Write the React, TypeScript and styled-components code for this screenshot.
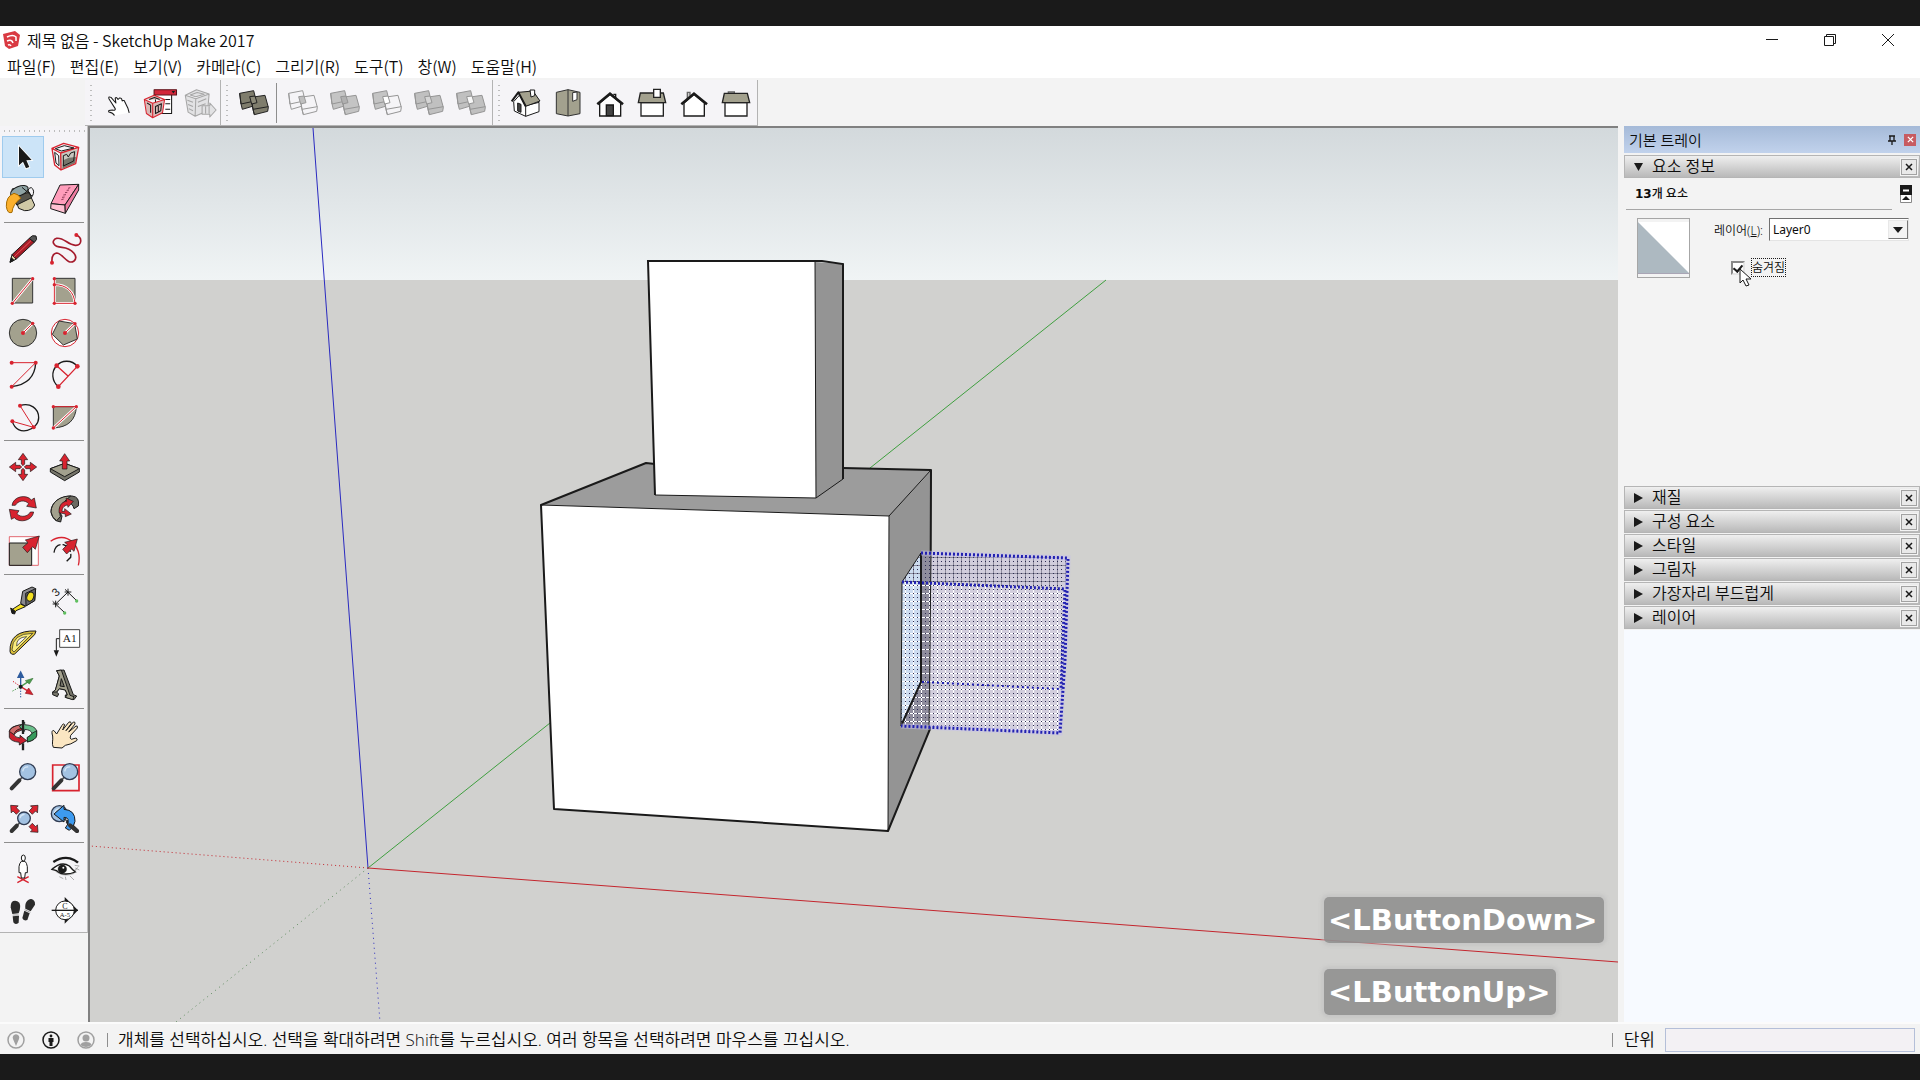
import React, { ReactNode, useState } from "react";
import styled, { createGlobalStyle, css } from "styled-components";

const INK = "#1a1a1a";
const RED = "#d8232f";
const STONE = "#a3a18e";
const uiFont = `"Noto Sans CJK KR", "Open Sans", sans-serif`;
const statusFont = `"Open Sans", "Noto Sans CJK KR", sans-serif`;
const trayFont = `"Noto Sans", "Noto Sans CJK KR", sans-serif`;

const GlobalStyle = createGlobalStyle`
  * { box-sizing: border-box; }
  body { margin: 0; background: ${INK}; color: #0c0c0c; font-family: ${uiFont}; font-weight: 350; }
  button, input, select { font: inherit; color: inherit; margin: 0; padding: 0; }
  button { border: 0; background: none; }
`;

const Screen = styled.div`
  display: flex;
  flex-direction: column;
  height: 100vh;
  padding: 26px 0;
  overflow: hidden;
`;
const AppWindow = styled.div`
  flex: 1;
  min-height: 0;
  display: flex;
  flex-direction: column;
  background: #f3f3f3;
`;
const TitleBar = styled.header`
  display: flex;
  align-items: center;
  height: 28px;
  padding: 0 3px 0 2px;
  background: #fff;
`;
const Title = styled.h1`
  flex: 1;
  margin: 0 0 0 5px;
  font-size: 16px;
  font-weight: 350;
  line-height: 28px;
`;
const Captions = styled.div`
  display: flex;
`;
const CaptionButton = styled.button`
  display: grid;
  place-items: center;
  width: 58px;
  height: 28px;
`;
const MenuBar = styled.nav`
  display: flex;
  gap: 14px;
  height: 24px;
  padding: 0 7px;
  background: #fff;
`;
const MenuButton = styled.button`
  font-size: 16px;
  line-height: 24px;
  white-space: nowrap;
`;
const ToolStrip = styled.div`
  display: flex;
  height: 48px;
  padding: 2px 0 0 85px;
`;
const dots = css`
  background-image: radial-gradient(circle, #bdbdbd 1px, transparent 1px);
`;
const ToolGroup = styled.div`
  display: flex;
  align-items: center;
  padding: 0 0 0 4px;
  border-right: 1px solid #b3b3b3;
  border-bottom: 1px solid #b3b3b3;
  background: #f5f4f7;
`;
const GripV = styled.span`
  align-self: stretch;
  width: 4px;
  margin: 3px 4px 3px 0;
  background-size: 4px 5px;
  ${dots}
`;
const GripH = styled.span`
  height: 4px;
  margin: 3px 2px;
  background-size: 5px 4px;
  ${dots}
`;
const ThinRule = styled.span`
  width: 1px;
  height: 40px;
  margin: 0 5px 0 1px;
  background: #8e8e8e;
`;
const Workspace = styled.div`
  flex: 1;
  min-height: 0;
  display: flex;
`;
const SideTools = styled.div`
  flex: none;
  align-self: flex-start;
  display: flex;
  flex-direction: column;
  width: 88px;
  border-right: 1px solid #c2c2c2;
  border-bottom: 1px solid #b3b3b3;
  background: #f5f4f7;
`;
const ToolGrid = styled.div`
  display: grid;
  grid-template-columns: 42px 42px;
  padding-left: 2px;
  & + & {
    margin-top: 4px;
    padding-top: 4px;
    position: relative;
  }
  & + &::before {
    content: "";
    position: absolute;
    top: -2px;
    left: 4px;
    right: 3px;
    height: 1px;
    background: #8e8e8e;
  }
`;
const Tool = styled.button<{ $on?: boolean; $narrow?: boolean }>`
  display: block;
  width: ${(p) => (p.$narrow ? 41 : 42)}px;
  height: 42px;
  border: 1px solid ${(p) => (p.$on ? "#9fcbee" : "transparent")};
  background: ${(p) => (p.$on ? "#cce4f8" : "transparent")};
  & > svg {
    display: block;
    margin: -1px;
    width: 42px;
    height: 42px;
  }
`;
const Viewport = styled.main`
  flex: 1;
  min-width: 0;
  position: relative;
  border-top: 2px solid #808080;
  border-left: 2px solid #808080;
  background: #d1d1cf;
  overflow: hidden;
`;
const Scene = styled.svg`
  display: block;
  width: 100%;
  height: 100%;
`;
const KeyLog = styled.div`
  position: absolute;
  left: 1234px;
  bottom: 7px;
  display: flex;
  flex-direction: column;
  align-items: flex-start;
  gap: 26px;
`;
const KeyBadge = styled.span`
  padding: 0 6px 0 4px;
  border-radius: 5px;
  background: rgba(145, 145, 145, 0.92);
  box-shadow: 0 0 3px 3px rgba(190, 190, 190, 0.5);
  color: #fff;
  font-family: "DejaVu Sans", sans-serif;
  font-size: 29px;
  font-weight: 700;
  line-height: 46px;
  white-space: nowrap;
`;
const Tray = styled.aside`
  flex: none;
  display: flex;
  flex-direction: column;
  gap: 1px;
  width: 302px;
  padding-left: 6px;
  font-family: ${trayFont};
`;
const TrayHead = styled.div`
  display: flex;
  align-items: center;
  height: 27px;
  margin-bottom: 1px;
  padding: 0 4px 0 5px;
  background: linear-gradient(#a5bad8, #c1d2ec);
`;
const TrayTitle = styled.h2`
  flex: 1;
  margin: 0;
  font-size: 15px;
  font-weight: 350;
  line-height: 26px;
`;
const PinButton = styled.button`
  display: grid;
  width: 12px;
  height: 12px;
  margin-right: 6px;
`;
const TrayClose = styled.button`
  display: grid;
  place-items: center;
  width: 12px;
  height: 12px;
  background: #c75b61;
`;
const SectionHead = styled.div`
  display: flex;
  align-items: center;
  height: 23px;
  padding-right: 2px;
  border: 1px solid #b5b5b5;
  background: linear-gradient(#efefef, #b9b9b9);
`;
const SectionToggle = styled.button`
  flex: 1;
  display: flex;
  align-items: center;
  gap: 9px;
  padding-left: 9px;
  font-size: 16px;
  line-height: 21px;
  text-align: left;
`;
const SectionClose = styled.button`
  display: grid;
  place-items: center;
  width: 16px;
  height: 16px;
  border: 1px solid #a2a2a2;
  outline: 1px solid #f4f4f4;
  background: #e9e9e9;
`;
const EntityPanel = styled.section`
  height: 306px;
  padding: 6px 8px 0 2px;
  font-size: 12px;
`;
const EntityHead = styled.div`
  display: flex;
  align-items: center;
  justify-content: space-between;
  padding-left: 9px;
`;
const DetailsButton = styled.button`
  & > svg {
    display: block;
  }
`;
const EntityCount = styled.strong`
  font-size: 12px;
  font-weight: 500;
  line-height: 18px;
`;
const CountDigits = styled.span`
  font-family: "DejaVu Sans", sans-serif;
  font-weight: 700;
`;
const EntityRule = styled.hr`
  height: 1px;
  margin: 6px 20px 8px 0;
  border: 0;
  background: #a6a6a6;
`;
const EntityBody = styled.div`
  display: flex;
  align-items: flex-start;
  padding: 0 3px 0 11px;
`;
const Swatch = styled.button`
  width: 53px;
  height: 60px;
  border: 1px solid #a6a6a6;
`;
const EntityFields = styled.div`
  flex: 1;
  margin-left: 24px;
`;
const LayerRow = styled.div`
  display: flex;
  align-items: center;
  gap: 6px;
  white-space: nowrap;
`;
const SelectBox = styled.div`
  flex: 1;
  position: relative;
`;
const LayerSelect = styled.select`
  display: block;
  width: 100%;
  height: 23px;
  padding-left: 3px;
  appearance: none;
  border: 1px solid;
  border-color: #707070 #e4e4e4 #e4e4e4 #707070;
  border-radius: 0;
  background: #fff;
  font-size: 12px;
  font-weight: 400;
`;
const SelectArrow = styled.span`
  position: absolute;
  top: 2px;
  right: 1px;
  display: grid;
  place-items: center;
  width: 20px;
  height: 19px;
  border: 1px solid;
  border-color: #e8e8e8 #777 #777 #e8e8e8;
  background: #f3f3f3;
  pointer-events: none;
`;
const HiddenRow = styled.div`
  display: flex;
  align-items: center;
  gap: 6px;
  position: relative;
  margin: 17px 0 0 17px;
`;
const HiddenBox = styled.input`
  appearance: none;
  display: grid;
  place-items: center;
  width: 14px;
  height: 14px;
  border: 2px solid;
  border-color: #888 #e4e4e4 #e4e4e4 #888;
  background: #fff;
  &:checked::after {
    content: "";
    width: 4px;
    height: 7px;
    border: solid ${INK};
    border-width: 0 2px 2px 0;
    transform: rotate(40deg);
  }
`;
const HiddenLabel = styled.label`
  border: 1px dotted ${INK};
  line-height: 17px;
`;
const Pointer = styled.svg`
  position: absolute;
  left: 8px;
  top: 10px;
  width: 14px;
  height: 20px;
`;
const TrayRest = styled.div`
  flex: 1;
  background: #f7faff;
`;
const StatusBar = styled.footer`
  display: flex;
  align-items: center;
  height: 32px;
  padding: 1px 5px 0 7px;
  border-top: 2px solid #fbfbfb;
  font-family: ${statusFont};
  font-size: 17px;
`;
const StatusLinks = styled.div`
  display: flex;
  gap: 17px;
  margin-right: 12px;
`;
const StatusButton = styled.button`
  width: 18px;
  height: 18px;
  & > svg {
    display: block;
  }
`;
const StatusRule = styled.span`
  width: 1px;
  height: 14px;
  background: #8e8e8e;
`;
const StatusText = styled.p`
  flex: 1;
  margin: 0 0 0 10px;
  line-height: 28px;
`;
const UnitLabel = styled.label`
  margin: 0 10px 0 11px;
  line-height: 28px;
`;
const UnitInput = styled.input`
  width: 250px;
  height: 24px;
  border: 1px solid #b4bfd8;
  background: #f3f1f4;
`;

/* ---------- icons ---------- */

const Dot = ({ x, y, r = 5 }: { x: number; y: number; r?: number }) => <circle cx={x} cy={y} r={r} fill={RED} />;
const RedLine = ({ d }: { d: string }) => (
  <g fill="none">
    <path d={d} stroke="#fff" strokeWidth="8" />
    <path d={d} stroke={RED} strokeWidth="3" />
  </g>
);
const Arrow = ({ x, y, a, s = 1, c = RED }: { x: number; y: number; a: number; s?: number; c?: string }) => (
  <path
    transform={`translate(${x} ${y}) rotate(${a}) scale(${s})`}
    d="M-20 -9H-2V-19L20 0L-2 19V9H-20Z"
    fill={c}
    stroke={INK}
    strokeWidth="2.5"
  />
);
const Lens = ({ x, y, r = 24, hx, hy }: { x: number; y: number; r?: number; hx: number; hy: number }) => {
  const d = Math.hypot(hx - x, hy - y);
  const ux = (hx - x) / d;
  const uy = (hy - y) / d;
  return (
    <g strokeLinecap="round">
      <path d={`M${x + ux * r} ${y + uy * r}L${hx} ${hy}`} stroke="#555" strokeWidth="5" />
      <path d={`M${x + ux * (r + 12)} ${y + uy * (r + 12)}L${hx} ${hy}`} stroke="#333" strokeWidth="12" />
      <circle cx={x} cy={y} r={r} fill="#a3c2e2" stroke="#2f3b52" strokeWidth="4" />
      <path d={`M${x - r * 0.6} ${y - r * 0.1}A${r * 0.6} ${r * 0.6} 0 0 1 ${x} ${y - r * 0.6}`} fill="none" stroke="#d6e6f5" strokeWidth="4" />
    </g>
  );
};

type Item = { name: string; box: string; art: ReactNode };

const sideGroups: Item[][] = [
  [
    {
      name: "선택",
      box: "6 33",
      art: <path d="M57 64V121L69 110L78 130L88 126L79 106L95 105Z" fill={INK} stroke="#fff" strokeWidth="5" paintOrder="stroke" />,
    },
    {
      name: "구성 요소 만들기",
      box: "132 33",
      art: (
        <g strokeLinejoin="round">
          <path d="M182 84L232 72L226 115L184 134Z" fill="#c9c8c0" />
          <path d="M190 106L206 98L228 96L225 115L187 131Z" fill="#77766c" />
          <path d="M156 70L191 55L236 67L227 116L183 135L164 120ZM156 70L182 84L236 67M182 84L183 135" fill="none" stroke={RED} strokeWidth="4" />
          <path d="M166 71L193 62L222 69L184 78ZM164 82L176 92L177 122L168 114ZM190 92L200 88L205 96L212 84L224 80L221 108L190 123Z" fill="none" stroke={INK} strokeWidth="3" />
        </g>
      ),
    },
    {
      name: "페인트 통",
      box: "6 159",
      art: (
        <g stroke={INK} strokeWidth="3" strokeLinejoin="round">
          <path d="M36 192L78 184L104 240Q98 258 74 257L56 250Z" fill="#cfc8a6" />
          <path d="M40 214L88 202L95 218L50 240Z" fill="#55534b" />
          <ellipse cx="58" cy="198" rx="28" ry="14" transform="rotate(-22 58 198)" fill="#8fa3a4" />
          <path d="M66 187Q86 204 97 214Q106 196 94 188Q84 188 84 202" fill="none" />
          <path d="M42 205Q18 214 19 244Q22 268 36 262Q38 238 62 220Q56 207 42 205Z" fill="#fbb02d" stroke="#a66b00" />
        </g>
      ),
    },
    {
      name: "지우개",
      box: "132 159",
      art: (
        <g stroke={INK} strokeWidth="3" strokeLinejoin="round">
          <path d="M180 180L236 178L195 240L153 236Z" fill="#ff9dbb" />
          <path d="M153 236L195 240L196 265L152 251Z" fill="#ffc0d2" />
          <path d="M195 240L236 178V195L196 265Z" fill="#ee7ba0" />
          <path d="M184 224L191 222M186 217L194 216M190 210L198 209M195 203L202 202M200 196L207 195M204 190L211 188" stroke="#8b3a55" />
        </g>
      ),
    },
  ],
  [
    {
      name: "선",
      box: "6 309",
      art: (
        <g stroke={INK} strokeWidth="3" strokeLinejoin="round">
          <path d="M30 412L36 389L49 402Z" fill="#e7d7a8" />
          <path d="M30 412L34 398L42 406Z" fill={INK} />
          <path d="M36 389L88 340L103 352L49 402Z" fill="#a81b26" />
          <path d="M42 396L94 346" stroke="#e5555b" />
          <path d="M88 340Q96 328 108 333Q114 344 103 352Z" fill="#555" />
        </g>
      ),
    },
    {
      name: "자유곡선",
      box: "132 309",
      art: (
        <g fill="none">
          <path d="M229 330C248 338 246 362 226 361C204 360 190 336 170 340C152 346 158 366 186 367C218 370 236 396 222 408C202 422 188 384 170 384C158 386 155 400 156 412" stroke="#a51a2c" strokeWidth="5" />
          <Dot x={229} y={330} r={6} />
          <Dot x={156} y={413} r={6} />
        </g>
      ),
    },
    {
      name: "직사각형",
      box: "6 435",
      art: (
        <g>
          <path d="M37 460H98V534H37Z" fill={STONE} stroke="#333" strokeWidth="3" />
          <RedLine d="M37 535L98 461" />
          <Dot x={37} y={535} />
          <Dot x={98} y={461} />
        </g>
      ),
    },
    {
      name: "회전 직사각형",
      box: "132 435",
      art: (
        <g>
          <path d="M163 460H225V534H163Z" fill={STONE} stroke="#333" strokeWidth="3" />
          <RedLine d="M163 461V535H225M163 479C200 479 222 500 225 535" />
          <Dot x={163} y={461} />
          <Dot x={163} y={479} />
          <Dot x={163} y={535} />
          <Dot x={225} y={535} />
        </g>
      ),
    },
    {
      name: "원",
      box: "6 561",
      art: (
        <g>
          <circle cx="69" cy="624" r="41" fill={STONE} stroke="#333" strokeWidth="3" />
          <RedLine d="M69 624L98 595" />
          <Dot x={69} y={624} r={6} />
          <Dot x={98} y={595} />
        </g>
      ),
    },
    {
      name: "다각형",
      box: "132 561",
      art: (
        <g>
          <circle cx="195" cy="624" r="41" fill="#fff" stroke={RED} strokeWidth="3" />
          <path d="M177 588L224 596L232 642L190 660L157 628Z" fill={STONE} stroke="#333" strokeWidth="3" />
          <RedLine d="M195 624L224 596" />
          <Dot x={195} y={624} r={6} />
          <Dot x={225} y={596} />
        </g>
      ),
    },
    {
      name: "호",
      box: "6 687",
      art: (
        <g fill="none">
          <path d="M107 713Q104 776 35 785" stroke={INK} strokeWidth="4" />
          <path d="M35 713H107L35 785" stroke={RED} strokeWidth="3" />
          <Dot x={35} y={713} r={6} />
          <Dot x={107} y={713} r={6} />
          <Dot x={35} y={785} r={6} />
        </g>
      ),
    },
    {
      name: "2점 호",
      box: "132 687",
      art: (
        <g fill="none">
          <path d="M232 724C214 702 184 706 170 722C152 740 156 770 175 785" stroke={INK} strokeWidth="4" />
          <path d="M232 724L175 785M170 722L204 753" stroke={RED} strokeWidth="4" />
          <Dot x={232} y={724} r={7} />
          <Dot x={170} y={722} r={7} />
          <Dot x={175} y={785} r={7} />
        </g>
      ),
    },
    {
      name: "3점 호",
      box: "6 813",
      art: (
        <g fill="none">
          <path d="M60 842C90 832 116 850 116 878C116 916 52 938 37 890" stroke={INK} strokeWidth="4" />
          <path d="M60 842L101 907L37 889" stroke={RED} strokeWidth="3" />
          <Dot x={60} y={842} r={6} />
          <Dot x={101} y={907} r={6} />
          <Dot x={37} y={889} r={6} />
        </g>
      ),
    },
    {
      name: "파이",
      box: "132 813",
      art: (
        <g>
          <path d="M160 845H229Q226 906 160 909Z" fill={STONE} stroke="#333" strokeWidth="3" />
          <RedLine d="M160 909L229 845" />
          <path d="M160 845H229" stroke={RED} strokeWidth="3" />
          <Dot x={160} y={845} />
          <Dot x={229} y={845} />
          <Dot x={160} y={909} />
        </g>
      ),
    },
  ],
  [
    {
      name: "이동",
      box: "6 18",
      art: [0, 90, 180, 270].map((a) => (
        <path key={a} transform={`translate(69 81) rotate(${a})`} d="M9 -5H22V-14L41 0L22 14V5H9L4 0Z" fill={RED} stroke={INK} strokeWidth="2" />
      )),
    },
    {
      name: "밀기/끌기",
      box: "132 18",
      art: (
        <g stroke={INK} strokeWidth="3" strokeLinejoin="round">
          <path d="M151 86L194 70L238 86V96L194 122L151 96Z" fill="#76756a" />
          <path d="M151 86L194 70L238 86L194 110Z" fill={STONE} />
          <path d="M187 87V63H179L194 41L209 63H201V87Z" fill={RED} strokeWidth="2" />
        </g>
      ),
    },
    {
      name: "회전",
      box: "6 144",
      art: (
        <g fill={RED} stroke={INK} strokeWidth="2" strokeLinejoin="round">
          <path d="M36 196C40 168 80 162 94 180L103 174L109 204L80 199L86 191C74 178 54 182 46 196Z" />
          <path d="M101 216C97 244 57 250 43 233L34 238L28 208L57 212L51 221C62 234 84 230 91 216Z" />
        </g>
      ),
    },
    {
      name: "따라가기",
      box: "132 144",
      art: (
        <g stroke={INK} strokeWidth="3" strokeLinejoin="round">
          <path d="M168 242C136 216 158 168 216 168Q240 170 235 198L222 206Q218 190 205 188C178 188 174 212 186 228L182 246Z" fill="#6b6a62" />
          <path d="M153 216C154 186 180 168 212 168Q190 184 180 204Q178 216 181 230L170 242Q156 234 153 216Z" fill={STONE} />
          <path d="M177 218C176 190 192 184 200 184L198 174L220 184L204 202L203 195C190 196 186 208 186 214H194V206L214 222L196 230V222Z" fill={RED} strokeWidth="2" />
        </g>
      ),
    },
    {
      name: "배율",
      box: "6 270",
      art: (
        <g>
          <path d="M28 290H115V376H28Z" fill="#fff" stroke={RED} strokeWidth="2" />
          <path d="M28 309H95V376H28Z" fill={STONE} stroke={INK} strokeWidth="3" />
          <path d="M68 322L84 308L76 300L118 288L106 328L98 320L82 338Z" fill={RED} stroke={INK} strokeWidth="2" />
        </g>
      ),
    },
    {
      name: "간격띄우기",
      box: "132 270",
      art: (
        <g fill="none" strokeWidth="4">
          <path d="M152 304C196 270 250 316 235 376" stroke={RED} />
          <path d="M162 338Q166 310 190 314Q216 324 212 352L200 364" stroke={INK} strokeDasharray="34 6" />
          <path d="M188 328L202 314L194 307L232 297L222 334L215 327L200 342Z" fill={RED} stroke={INK} strokeWidth="2" />
        </g>
      ),
    },
  ],
  [
    {
      name: "줄자 도구",
      box: "6 420",
      art: (
        <g stroke={INK} strokeWidth="3" strokeLinejoin="round">
          <path d="M62 492L76 500L48 512L44 520L34 510Z" fill="#f4e022" />
          <path d="M32 504L44 512V522L36 520Z" fill={INK} />
          <path d="M68 454L96 441L107 446L104 482L76 498L62 490Z" fill="#8a8a8e" />
          <path d="M77 460L107 446L104 482L78 498Z" fill="#66666b" />
          <ellipse cx="91" cy="470" rx="10" ry="14" fill="#f4e022" transform="rotate(20 91 470)" />
        </g>
      ),
    },
    {
      name: "치수",
      box: "132 420",
      art: (
        <g stroke={INK} strokeWidth="3" fill="none">
          <path d="M167 492L204 456M195 448L230 482M158 484L194 518M194 456H214M204 446V467M158 492H177M167 482V502" />
          <text x="168" y="472" transform="rotate(-42 168 472)" fontSize="34" fontFamily="Liberation Sans" fill={INK} stroke="none">
            3
          </text>
          <circle cx="230" cy="483" r="5" fill="#5fbf5f" stroke="none" />
          <circle cx="194" cy="519" r="5" fill="#5fbf5f" stroke="none" />
        </g>
      ),
    },
    {
      name: "각도기",
      box: "6 546",
      art: (
        <g stroke={INK} strokeWidth="3" strokeLinejoin="round">
          <path d="M30 634Q28 570 108 573L104 584L44 642Q32 646 30 634Z" fill="#d9be3a" />
          <path d="M36 630Q36 580 98 580L42 636Z" fill="#f9ec7c" strokeWidth="2" />
          <path d="M50 618Q48 592 80 590Z" fill="#f5f4f7" strokeWidth="2" />
        </g>
      ),
    },
    {
      name: "텍스트",
      box: "132 546",
      art: (
        <g>
          <path d="M179 569H239V622H179Z" fill="#fff" stroke="#444" strokeWidth="3" />
          <path d="M178 596H169V632" fill="none" stroke={INK} strokeWidth="3" />
          <path d="M161 631H177L169 650Z" fill={INK} />
          <text x="209" y="606" textAnchor="middle" fontSize="34" fontFamily="Liberation Serif" fill={INK}>
            A1
          </text>
        </g>
      ),
    },
    {
      name: "축",
      box: "6 672",
      art: (
        <g strokeWidth="4" fill="none">
          <path d="M62 740V710" stroke="#2e5c9e" />
          <path d="M54 712L62 696L70 712Z" fill="#2e5c9e" stroke="#2e5c9e" />
          <path d="M62 740L86 724" stroke="#4d9b4d" />
          <path d="M76 722L99 715L88 732Z" fill="#4d9b4d" stroke="#3c7a3c" strokeWidth="2" />
          <path d="M62 740L82 752" stroke={RED} />
          <path d="M86 744L99 764L76 760Z" fill={RED} stroke="#901820" strokeWidth="2" />
          <path d="M62 740L36 722" stroke={RED} strokeDasharray="4 4" strokeWidth="3" />
          <path d="M62 740L36 754" stroke="#4d9b4d" strokeDasharray="4 4" strokeWidth="3" />
          <path d="M62 744V772" stroke="#2e5c9e" strokeDasharray="4 4" strokeWidth="3" />
          <circle cx="62" cy="740" r="6" fill={INK} />
        </g>
      ),
    },
    {
      name: "3D 텍스트",
      box: "132 672",
      art: (
        <g stroke={INK} strokeWidth="3" strokeLinejoin="round">
          <path d="M170 692L192 690L220 764L230 768L222 779L196 772V765L202 764L196 750L178 746L170 756L176 762L172 770L158 764V756L166 752L178 708Z" fill="#76756a" />
          <path d="M170 692L184 690L210 766L222 770L218 779L196 772L202 764L196 750L178 746L170 756L158 756L166 750L178 708ZM184 716L180 738L193 740Z" fill={STONE} fillRule="evenodd" />
        </g>
      ),
    },
  ],
  [
    {
      name: "궤도",
      box: "6 42",
      art: (
        <g stroke={INK} strokeWidth="2.5" strokeLinejoin="round">
          <path d="M66 74Q30 78 28 94V112Q32 124 58 127V135L80 122L60 106V114Q44 112 42 104Q48 94 66 90Z" fill="#c9202f" />
          <path d="M28 94Q32 80 62 74V86Q44 90 42 104Z" fill="#cf6a6a" />
          <path d="M74 74V66L58 80L74 94V88Q94 90 96 100Q92 108 82 112V126Q108 120 110 106V92Q104 76 74 74Z" fill="#6abf8b" />
          <path d="M96 100Q92 108 82 112V126Q108 120 110 106V92Z" fill="#359a5b" />
          <path d="M69 60V102M69 130V151" stroke="#222" strokeWidth="7" />
        </g>
      ),
    },
    {
      name: "이동 보기",
      box: "132 42",
      art: (
        <path
          d="M160 142C154 130 160 122 158 108C154 96 156 90 162 92L170 102L186 76Q190 68 194 74L188 90L206 67Q212 62 214 70L198 92L220 66Q226 64 225 72L206 96L228 78Q234 76 232 84L212 106Q208 116 214 118L228 114Q234 116 230 122Q212 134 196 136L186 144Z"
          fill="#fbe6c2"
          stroke={INK}
          strokeWidth="3"
          strokeLinejoin="round"
        />
      ),
    },
    { name: "확대/축소", box: "6 168", art: <Lens x={83} y={215} hx={35} hy={265} /> },
    {
      name: "확대/축소 창",
      box: "132 168",
      art: (
        <g>
          <path d="M158 195H237V272H158Z" fill="none" stroke={RED} strokeWidth="5" />
          <Lens x={209} y={215} hx={161} hy={265} />
        </g>
      ),
    },
    {
      name: "범위 확대/축소",
      box: "6 294",
      art: (
        <g>
          <Lens x={72} y={355} r={19} hx={35} hy={393} />
          <Arrow x={103} y={327} a={-45} s={0.78} />
          <Arrow x={43} y={327} a={-135} s={0.78} />
          <Arrow x={103} y={386} a={45} s={0.78} />
        </g>
      ),
    },
    {
      name: "이전",
      box: "132 294",
      art: (
        <g>
          <Lens x={178} y={341} hx={231} hy={393} />
          <path d="M162 342L192 316V328Q226 330 225 364Q222 382 208 391L196 384Q208 372 204 358Q202 352 192 352V366Z" fill="#3d9af0" stroke={INK} strokeWidth="3" strokeLinejoin="round" />
          <path d="M210 376L231 393" stroke="#333" strokeWidth="12" strokeLinecap="round" />
        </g>
      ),
    },
  ],
  [
    {
      name: "카메라 배치",
      box: "6 444",
      art: (
        <g stroke={INK} strokeWidth="3" fill="#fff" strokeLinejoin="round">
          <path d="M52 548L86 530M52 530L86 548" stroke={RED} strokeWidth="4" />
          <path d="M64 484Q58 490 57 500V518H62L64 534H74L76 518H82V500Q80 488 75 484Z" />
          <ellipse cx="70" cy="474" rx="6" ry="9" />
        </g>
      ),
    },
    {
      name: "둘러보기",
      box: "132 444",
      art: (
        <g fill="none" stroke={INK}>
          <path d="M156 500Q176 538 222 522L238 496Q200 540 156 500Z" fill="#b5b5b5" stroke="none" />
          <path d="M160 486Q184 470 210 475Q226 480 234 488" strokeWidth="7" />
          <path d="M156 508Q184 482 208 498Q218 510 226 516Q190 530 170 512L156 508Z" fill="#fff" strokeWidth="4" />
          <circle cx="187" cy="507" r="13" fill={INK} />
          <circle cx="190" cy="503" r="3" fill="#fff" stroke="none" />
          <path d="M178 530L190 536M196 530L198 540M210 528L222 540M224 496L238 498M226 504L238 510" strokeWidth="2" stroke="#888" />
        </g>
      ),
    },
    {
      name: "걷기",
      box: "6 570",
      art: (
        <g fill="#2b2b2b">
          <path d="M40 603Q32 606 32 622L37 642L56 640Q64 620 58 608Q50 600 40 603Z" />
          <path d="M38 649L57 647L56 668Q46 676 40 667Z" />
          <path d="M94 597Q106 600 105 614L92 634L76 626Q74 610 82 602Q88 596 94 597Z" />
          <path d="M73 632L89 640L82 660Q70 664 67 654Z" />
          <path d="M38 645H56M74 629L91 637" stroke="#999" strokeWidth="3" />
        </g>
      ),
    },
    {
      name: "단면 평면",
      box: "132 570",
      art: (
        <g>
          <path d="M194 591L234 631L194 671Z" fill={INK} />
          <circle cx="195" cy="631" r="28" fill="#fff" stroke={INK} strokeWidth="3" />
          <path d="M155 631H234" stroke={INK} strokeWidth="4" />
          <g fontFamily="Liberation Serif" fontSize="24" textAnchor="middle" fill={INK}>
            <text x="195" y="626">C</text>
            <text x="195" y="651" fontSize="20">A-5</text>
          </g>
        </g>
      ),
    },
  ],
];

const topA: Item[] = [
  {
    name: "상호 작용",
    box: "0 0",
    art: <path d="M50 96Q46 88 34 86Q30 80 44 80Q54 82 52 76L34 48Q32 40 40 44L54 60L52 46Q56 42 60 50L64 46Q70 44 72 54Q78 50 80 58L88 74L92 88" fill="#fff" stroke={INK} strokeWidth="3" strokeLinejoin="round" />,
  },
  {
    name: "구성 요소 옵션",
    box: "-4 0",
    art: (
      <g strokeLinejoin="round">
        <path d="M46 27H92V90H46Z" fill="#fff" stroke={INK} strokeWidth="3" />
        <path d="M42 22H106V37H42Z" fill="#d3273a" stroke="#5b1018" strokeWidth="3" />
        <path d="M92 26H102L97 33Z" fill={INK} />
        <path d="M74 50H88M74 62H88M74 78H88" stroke={INK} strokeWidth="3" />
        <path d="M14 50L42 38L72 50L66 88L38 102L20 90ZM14 50L38 61L72 50M38 61V102" fill="#d9b8b6" stroke={RED} strokeWidth="3" />
        <path d="M22 60L32 66V88M46 70L63 62L61 82L46 90ZM54 66V86M28 50L43 44L58 50" fill="none" stroke={INK} strokeWidth="3" />
      </g>
    ),
  },
  {
    name: "구성 요소 특성",
    box: "-2 0",
    art: (
      <g strokeLinejoin="round" fill="#e2e2e4" stroke="#a6a6a6" strokeWidth="3">
        <path d="M16 38L48 22L84 34L80 82L44 98L24 86ZM16 38L46 48L84 34M46 48L44 98M22 52L38 58M24 64L38 70M26 76L38 82M52 58L76 48M52 70L74 62M30 37L50 30L70 35L46 42Z" />
        <path d="M64 68H86V60L104 80L86 100V92H64ZM74 70V90M84 70V90" />
      </g>
    ),
  },
];

const SolidPair = ({ back, front, hole, line }: { back: string; front: string; hole: string; line: string }) => (
  <g strokeLinejoin="round" stroke={line} strokeWidth="3">
    <path d="M20 34L62 26L70 58L68 70L28 82L24 66Z" fill={back} />
    <path d="M20 34L24 66L70 56" fill="none" />
    <path d="M54 46L96 40L106 76L104 88L64 98L60 82Z" fill={front} />
    <path d="M54 46L60 82L106 74M60 82L64 98" fill="none" />
    <path d="M50 44L66 42L72 62L56 66Z" fill={hole} />
  </g>
);
const solids: Item[] = [
  { name: "외부 쉘", box: "0 0", art: <SolidPair back="#7f7d6d" front="#7f7d6d" hole="#8c8a79" line="#222" /> },
  { name: "교차", box: "0 0", art: <SolidPair back="#f5f4f7" front="#f5f4f7" hole="#bfbfbf" line="#999" /> },
  { name: "합집합", box: "0 0", art: <SolidPair back="#c4c4c4" front="#c4c4c4" hole="#b0b0b0" line="#959595" /> },
  { name: "빼기", box: "0 0", art: <SolidPair back="#c4c4c4" front="#f5f4f7" hole="#fff" line="#959595" /> },
  { name: "트림", box: "0 0", art: <SolidPair back="#c0c0c0" front="#c0c0c0" hole="#d5d5d5" line="#959595" /> },
  { name: "분할", box: "0 0", art: <SolidPair back="#c0c0c0" front="#c0c0c0" hole="#f7f7f7" line="#959595" /> },
];

const views: Item[] = [
  {
    name: "등각",
    box: "74 35",
    art: (
      <g stroke={INK} strokeWidth="3" strokeLinejoin="round">
        <path d="M100 94L118 74L136 106L176 96V124L136 138L102 122Z" fill="#fff" />
        <path d="M136 106V138" />
        <path d="M112 98L122 102V126L112 122Z" fill="#444" />
        <path d="M114 66L158 62L179 92L136 108Z" fill={STONE} />
        <path d="M94 93L114 66L136 108" fill="none" strokeWidth="6" />
        <path d="M149 59H163V76L152 80Z" fill="#fff" />
      </g>
    ),
  },
  {
    name: "위",
    box: "199 35",
    art: (
      <g stroke="#333" strokeWidth="3" strokeLinejoin="round">
        <path d="M227 66L262 58L298 66V130L262 137L227 130Z" fill={STONE} />
        <path d="M262 58V137" />
        <path d="M276 67L289 65V88L276 93Z" fill="#fff" />
      </g>
    ),
  },
  {
    name: "전면",
    box: "325 35",
    art: (
      <g stroke={INK} strokeWidth="4">
        <path d="M398 72H405V84" fill="none" />
        <path d="M357 98L388 72L420 98V137H357Z" fill="#fff" />
        <path d="M377 104H398V136H377Z" fill="#444" />
        <path d="M350 102L388 70L427 102" fill="none" strokeWidth="8" />
      </g>
    ),
  },
  {
    name: "오른쪽",
    box: "450 35",
    art: (
      <g stroke="#222" strokeWidth="4">
        <path d="M480 97H547V137H480Z" fill="#fff" />
        <path d="M478 68H547L554 97H472Z" fill={STONE} />
        <path d="M518 57H538V81H518Z" fill="#fff" />
      </g>
    ),
  },
  {
    name: "후면",
    box: "575 35",
    art: (
      <g stroke={INK} strokeWidth="4">
        <path d="M618 86V66H626V76" fill="#ccc" stroke="#666" />
        <path d="M608 98L638 72L669 98V137H608Z" fill="#fff" />
        <path d="M600 102L638 70L677 102" fill="none" strokeWidth="8" />
      </g>
    ),
  },
  {
    name: "왼쪽",
    box: "702 35",
    art: (
      <g stroke="#222" strokeWidth="4">
        <path d="M742 68V65H760V68" fill="none" stroke="#666" />
        <path d="M732 97H798V137H732Z" fill="#fff" />
        <path d="M730 69H799L806 97H724Z" fill={STONE} />
      </g>
    ),
  },
];

const ToolButtons = ({ items, size = 126, active, narrow }: { items: Item[]; size?: number; active?: string; narrow?: boolean }) => (
  <>
    {items.map((t) => (
      <Tool key={t.name} type="button" aria-label={t.name} $on={t.name === active} $narrow={narrow}>
        <svg viewBox={`${t.box} ${size} ${size}`}>{t.art}</svg>
      </Tool>
    ))}
  </>
);

const Cross = ({ size, color = INK }: { size: number; color?: string }) => (
  <svg width={size} height={size} viewBox="0 0 8 8">
    <path d="M1 1L7 7M7 1L1 7" stroke={color} strokeWidth="1.5" />
  </svg>
);

const menus = ["파일(F)", "편집(E)", "보기(V)", "카메라(C)", "그리기(R)", "도구(T)", "창(W)", "도움말(H)"];
const sections = ["재질", "구성 요소", "스타일", "그림자", "가장자리 부드럽게", "레이어"];

function TraySection({ title, open }: { title: string; open?: boolean }) {
  return (
    <SectionHead>
      <SectionToggle type="button" aria-expanded={!!open}>
        <svg width="9" height="10" viewBox="0 0 9 10">
          <path d={open ? "M0 1H9L4.500 9Z" : "M0 0L9 5L0 10Z"} fill={INK} />
        </svg>
        {title}
      </SectionToggle>
      <SectionClose type="button" aria-label={`${title} 닫기`}>
        <Cross size={8} />
      </SectionClose>
    </SectionHead>
  );
}

function Model() {
  return (
    <Scene viewBox="90 128 1528 894" preserveAspectRatio="xMinYMin slice" role="img" aria-label="모델">
      <defs>
        <linearGradient id="sky" x1="0" y1="0" x2="0" y2="1">
          <stop offset="0" stopColor="#d3d9dc" />
          <stop offset="1" stopColor="#f0f4f5" />
        </linearGradient>
        <pattern id="pick" width="8" height="8" x="905" y="585" patternUnits="userSpaceOnUse">
          <path d="M0 0H8V1H0ZM0 0H1V8H0Z" fill="#fff" />
          <path d="M0 0h1v1h-1zM4 0h1v1h-1zM0 4h1v1h-1zM4 4h1v1h-1z" fill="#2b2b52" />
        </pattern>
        <pattern id="pickDark" width="8" height="8" x="905" y="557" patternUnits="userSpaceOnUse">
          <path d="M0 0H8V1H0ZM0 0H1V8H0Z" fill="#8e8c9c" />
          <path d="M0 0h1v1h-1zM4 0h1v1h-1zM0 4h1v1h-1zM4 4h1v1h-1z" fill="#2b2b52" />
        </pattern>
      </defs>
      <rect x="90" y="128" width="1528" height="152" fill="url(#sky)" />
      <rect x="90" y="280" width="1528" height="742" fill="#d1d1cf" />
      <g fill="none" strokeWidth="1">
        <path d="M368 868L313 128" stroke="#2a2ac0" />
        <path d="M368 868L380 1022" stroke="#2a2ac0" strokeDasharray="1 4" />
        <path d="M368 868L1106 280" stroke="#3f9f3f" />
        <path d="M368 868L176 1022" stroke="#5c8a5c" strokeDasharray="1 4" />
        <path d="M368 868L1618 962" stroke="#c4262e" />
        <path d="M368 868L90 846" stroke="#c4262e" strokeDasharray="1 3" />
      </g>
      <path d="M541 505L646 463L932 470L890 516Z" fill="#9c9c9c" />
      <path d="M541 505L889 516L888 831L554 809Z" fill="#fff" />
      <path d="M889 516L932 470L930 729L888 831Z" fill="#949494" />
      <path d="M541 505L889 516L931 470M889 516L888 831" fill="none" stroke={INK} strokeWidth="1" />
      <path d="M655 464L646 463L541 505L554 809L888 831L930 729L931 470L843 468" fill="none" stroke={INK} strokeWidth="2" strokeLinejoin="round" />
      <path d="M648 261L815 261L816 498L655 495Z" fill="#fff" />
      <path d="M815 262L843 264V479L816 498Z" fill="#949494" />
      <path d="M655 495L816 498L843 479M815 262L816 498" fill="none" stroke={INK} strokeWidth="1" />
      <path d="M655 495L648 261H822L843 264V479" fill="none" stroke={INK} strokeWidth="2" />
      <path d="M902 582L921 553V682L901 724Z" fill="#cddcf0" />
      <path d="M921 553L932 554L930 729L901 726L921 682Z" fill="#8f8d9d" />
      <path d="M931 554L1068 558L1060 733L930 727Z" fill="#d1cddc" />
      <path d="M902 582L921 553L1068 558L1065 589Z" fill="url(#pickDark)" />
      <path d="M902 582L1065 589L1060 733L901 726Z" fill="url(#pick)" />
      <path d="M902 582L921 553M902 582L901 724M931 554L929 729" stroke={INK} strokeWidth="1" />
      <path d="M921 553V682L901 726" fill="none" stroke={INK} strokeWidth="2" />
      <path d="M921 553L1068 558L1066 637L1060 733L901 726" fill="none" stroke="#c5c0f0" strokeOpacity="0.5" strokeWidth="5" />
      <g fill="none" stroke="#2020b0" strokeWidth="3" strokeDasharray="2 2">
        <path d="M921 553L1068 558L1065 660L1060 733L901 726" />
        <path d="M902 582L1065 589L1061 690" />
        <path d="M922 682L1061 689" strokeWidth="2" strokeDasharray="2 3" />
      </g>
    </Scene>
  );
}

export default function App() {
  const [hidden, setHidden] = useState(true);
  return (
    <>
      <GlobalStyle />
      <Screen>
        <AppWindow>
          <TitleBar>
            <svg width="20" height="20" viewBox="0 0 20 20">
              <path d="M1 4L13 1L18 5L16 16L7 19L3 16Z" fill="#d93a42" />
              <path d="M5 7Q11 4 14 7V11M5 11Q10 9 11 13M6 15Q8 14 9 16" fill="none" stroke="#fff" strokeWidth="1.5" />
            </svg>
            <Title>제목 없음 - SketchUp Make 2017</Title>
            <Captions>
              <CaptionButton type="button" aria-label="최소화">
                <svg width="12" height="12" viewBox="0 0 12 12">
                  <path d="M0 5H12V6H0Z" fill={INK} />
                </svg>
              </CaptionButton>
              <CaptionButton type="button" aria-label="이전 크기로">
                <svg width="12" height="12" viewBox="0 0 12 12" fill="none" stroke={INK}>
                  <path d="M0.500 2.500H9.500V11.500H0.500ZM2.500 2.500V0.500H11.500V9.500H9.500" />
                </svg>
              </CaptionButton>
              <CaptionButton type="button" aria-label="닫기">
                <svg width="12" height="12" viewBox="0 0 12 12">
                  <path d="M0 0L12 12M12 0L0 12" stroke={INK} />
                </svg>
              </CaptionButton>
            </Captions>
          </TitleBar>
          <MenuBar>
            {menus.map((m) => (
              <MenuButton key={m} type="button">
                {m}
              </MenuButton>
            ))}
          </MenuBar>
          <ToolStrip>
            <ToolGroup>
              <GripV />
              <ToolButtons items={topA} size={120} narrow />
            </ToolGroup>
            <ToolGroup>
              <GripV />
              <ToolButtons items={solids.slice(0, 1)} />
              <ThinRule />
              <ToolButtons items={solids.slice(1)} />
            </ToolGroup>
            <ToolGroup>
              <GripV />
              <ToolButtons items={views} />
            </ToolGroup>
          </ToolStrip>
          <Workspace>
            <SideTools>
              <GripH />
              {sideGroups.map((g, i) => (
                <ToolGrid key={i}>
                  <ToolButtons items={g} active="선택" />
                </ToolGrid>
              ))}
            </SideTools>
            <Viewport>
              <Model />
              <KeyLog>
                <KeyBadge>&lt;LButtonDown&gt;</KeyBadge>
                <KeyBadge>&lt;LButtonUp&gt;</KeyBadge>
              </KeyLog>
            </Viewport>
            <Tray>
              <TrayHead>
                <TrayTitle>기본 트레이</TrayTitle>
                <PinButton type="button" aria-label="자동 숨기기">
                  <svg width="12" height="12" viewBox="0 0 12 12">
                    <path d="M3 2H9M4 2V7M8 2V7M2 7H10M6 7V11" stroke={INK} fill="none" strokeWidth="1.3" />
                  </svg>
                </PinButton>
                <TrayClose type="button" aria-label="트레이 닫기">
                  <Cross size={7} color="#fff" />
                </TrayClose>
              </TrayHead>
              <TraySection title="요소 정보" open />
              <EntityPanel>
                <EntityHead>
                  <EntityCount>
                    <CountDigits>13</CountDigits>개 요소
                  </EntityCount>
                  <DetailsButton type="button" aria-label="세부 정보 숨기기">
                    <svg width="12" height="18" viewBox="0 0 12 18">
                      <path d="M0.500 0.500H11.500V17.500H0.500Z" fill="#fff" stroke="#888" />
                      <path d="M0 0H12V10H0Z" fill={INK} />
                      <path d="M3 4.500H9V6.500H3Z" fill="#fff" />
                      <path d="M6 11L10 15H2Z" fill={INK} />
                    </svg>
                  </DetailsButton>
                </EntityHead>
                <EntityRule />
                <EntityBody>
                  <Swatch type="button" aria-label="재질">
                    <svg width="51" height="58" viewBox="0 0 51 58" display="block">
                      <path d="M0 3H51V54H0Z" fill="#fff" />
                      <path d="M0 3L51 54H0Z" fill="#adb9c1" />
                      <path d="M0 54H51V55H0Z" fill="#a9a5b5" />
                    </svg>
                  </Swatch>
                  <EntityFields>
                    <LayerRow>
                      <label htmlFor="layer">
                        레이어(<u>L</u>):
                      </label>
                      <SelectBox>
                        <LayerSelect id="layer" defaultValue="Layer0">
                          <option>Layer0</option>
                        </LayerSelect>
                        <SelectArrow>
                          <svg width="10" height="6" viewBox="0 0 10 6">
                            <path d="M0 0H10L5 6Z" fill={INK} />
                          </svg>
                        </SelectArrow>
                      </SelectBox>
                    </LayerRow>
                    <HiddenRow>
                      <HiddenBox id="hidden" type="checkbox" checked={hidden} onChange={(e) => setHidden(e.target.checked)} />
                      <HiddenLabel htmlFor="hidden">숨겨짐</HiddenLabel>
                      <Pointer viewBox="0 0 14 20">
                        <path d="M1 1V15L4 12L7 18L10 17L7 11H12Z" fill="#fff" stroke={INK} />
                      </Pointer>
                    </HiddenRow>
                  </EntityFields>
                </EntityBody>
              </EntityPanel>
              {sections.map((s) => (
                <TraySection key={s} title={s} />
              ))}
              <TrayRest />
            </Tray>
          </Workspace>
          <StatusBar>
            <StatusLinks>
              <StatusButton type="button" aria-label="위치">
                <svg width="18" height="18" viewBox="0 0 18 18">
                  <circle cx="9" cy="9" r="8" fill="none" stroke="#a0a0a0" strokeWidth="1.5" />
                  <path d="M9 15L6 8A3.300 3.300 0 1 1 12 8Z" fill="#a0a0a0" />
                </svg>
              </StatusButton>
              <StatusButton type="button" aria-label="정보">
                <svg width="18" height="18" viewBox="0 0 18 18">
                  <circle cx="9" cy="9" r="8" fill="none" stroke={INK} strokeWidth="1.500" />
                  <circle cx="9" cy="5" r="1.400" fill={INK} />
                  <path d="M6.500 7H11.500V11H10.500V15H7.500V11H6.500Z" fill={INK} />
                </svg>
              </StatusButton>
              <StatusButton type="button" aria-label="로그인">
                <svg width="18" height="18" viewBox="0 0 18 18">
                  <circle cx="9" cy="9" r="8" fill="none" stroke="#a0a0a0" strokeWidth="1.500" />
                  <circle cx="9" cy="7" r="3.500" fill="#a0a0a0" />
                  <path d="M3.500 14Q4 11 9 11T14.500 14Q9 18 3.500 14Z" fill="#a0a0a0" />
                </svg>
              </StatusButton>
            </StatusLinks>
            <StatusRule />
            <StatusText>개체를 선택하십시오. 선택을 확대하려면 Shift를 누르십시오. 여러 항목을 선택하려면 마우스를 끄십시오.</StatusText>
            <StatusRule />
            <UnitLabel htmlFor="unit">단위</UnitLabel>
            <UnitInput id="unit" type="text" />
          </StatusBar>
        </AppWindow>
      </Screen>
    </>
  );
}
